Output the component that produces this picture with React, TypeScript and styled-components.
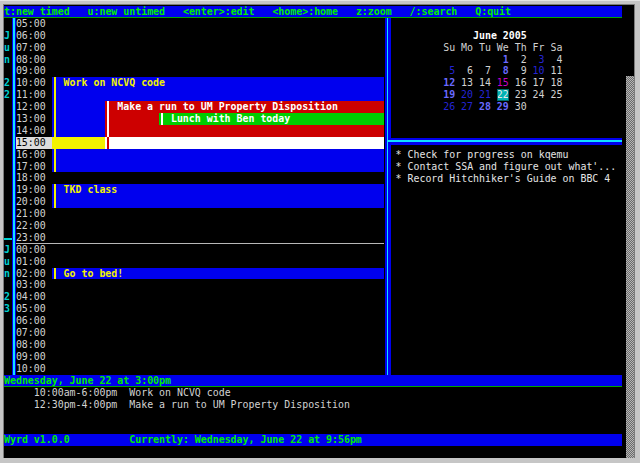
import React from 'react'
import styled, { createGlobalStyle, css } from 'styled-components'

const ROW = 11.9
const BLUE = '#0000ee'
const CYAN = '#00d0d0'
const GREEN = '#00ee00'
const YELLOW = '#f2f200'
const RED = '#cd0000'
const EV_GREEN = '#00cd00'
const LIGHT = '#d2d2d2'

const GlobalStyle = createGlobalStyle`
  html, body {
    margin: 0;
    padding: 0;
    background: #c6c6c6;
  }
  body {
    font-family: 'DejaVu Sans Mono', 'Liberation Mono', monospace;
    font-size: 9.92px;
    line-height: ${ROW}px;
  }
`

const Frame = styled.div`
  width: 640px;
  height: 463px;
  box-sizing: border-box;
  padding: 3px 0 0 3px;
  background: #c6c6c6;
  border-top: 1px solid #e4e4e4;
`

const Terminal = styled.div`
  display: flex;
  height: ${ROW * 38 + 1}px;
  background: #000;
  border-top: 1px solid #7c7c7c;
  border-left: 1px solid #7c7c7c;
  width: fit-content;
`

const Screen = styled.div`
  width: 618px;
  padding: 1px 4px 0 0;
  display: flex;
  flex-direction: column;
`

const Scrollbar = styled.div`
  width: 8px;
  display: flex;
  flex-direction: column;
  border-right: 1px solid #7c7c7c;
`

const Track = styled.div`
  height: 71px;
  background: #000;
`

const Thumb = styled.div`
  flex: 1;
  background: repeating-conic-gradient(#6c6c6c 0 25%, #b6b6b6 0 50%) 0 0 / 2px 2px;
`

// a full-width ncurses status line: blue with green text
const Bar = styled.div<{ $underline?: boolean; $spaced?: boolean }>`
  display: flex;
  gap: ${(p) => (p.$spaced ? '3ch' : '0')};
  height: ${ROW}px;
  flex: none;
  background: ${BLUE};
  color: ${GREEN};
  font-weight: bold;
  white-space: pre;
  ${(p) =>
    p.$underline &&
    css`
      box-shadow: inset 0 -1px 0 #00a400;
    `}
`

const BarCell = styled.span<{ $w?: number }>`
  ${(p) => p.$w && `width: ${p.$w}ch;`}
`

const Body = styled.div`
  display: flex;
  height: ${ROW * 30}px;
  flex: none;
`

const Timeline = styled.div`
  display: flex;
`

const DayColumn = styled.div`
  width: 1ch;
  display: flex;
  flex-direction: column;
`

const DayCell = styled.div<{ $dash?: boolean }>`
  height: ${ROW}px;
  text-align: center;
  color: ${CYAN};
  font-weight: bold;
  ${(p) =>
    p.$dash &&
    css`
      background: linear-gradient(to bottom, transparent 6px, ${CYAN} 6px 8px, transparent 8px);
      margin-right: -2px;
    `}
`

const VRule = styled.div`
  width: 1ch;
  background: linear-gradient(
    90deg,
    transparent 0 2px,
    ${BLUE} 2px 3px,
    #10e0ff 3px 4.6px,
    ${BLUE} 4.6px 5.6px,
    transparent 5.6px
  );
`

const Rows = styled.div`
  display: flex;
  flex-direction: column;
`

const HourRow = styled.div<{ $sep?: boolean }>`
  display: flex;
  height: ${ROW}px;
  ${(p) =>
    p.$sep &&
    css`
      box-shadow: inset 0 -1px 0 #b8b8b8;
    `}
`

const TimeLabel = styled.div<{ $cursor?: boolean }>`
  width: 6ch;
  color: ${(p) => (p.$cursor ? '#000' : LIGHT)};
  background: ${(p) => (p.$cursor ? '#dcdcdc' : 'transparent')};
`

const Events = styled.div`
  width: 332.4px;
  display: flex;
`

const Segment = styled.div<{ $bg: string; $fg: string; $w?: number }>`
  display: flex;
  flex: ${(p) => (p.$w ? `0 0 ${p.$w}ch` : '1')};
  background: ${(p) => p.$bg};
  color: ${(p) => p.$fg};
  font-weight: bold;
  white-space: pre;
  overflow: hidden;
`

const Pipe = styled.span<{ $color: string }>`
  flex: none;
  width: 1ch;
  height: ${ROW}px;
  margin-right: 1ch;
  background: linear-gradient(
    90deg,
    transparent calc(50% - 1px),
    ${(p) => p.$color} calc(50% - 1px) calc(50% + 1px),
    transparent calc(50% + 1px)
  );
`

const Divider = styled.div`
  width: 5.6px;
  margin-left: 1px;
  flex: none;
  background: linear-gradient(90deg, ${BLUE} 0 1.7px, #10e0ff 1.7px 3.5px, ${BLUE} 3.5px);
`

const SidePanel = styled.div`
  flex: 1;
  display: flex;
  flex-direction: column;
`

const Calendar = styled.div`
  height: ${ROW * 10}px;
  box-sizing: border-box;
  padding: ${ROW}px 0 0 52.5px;
`

const CalTitle = styled.div`
  padding-left: 5ch;
  color: #fff;
  font-weight: bold;
`

const CalGrid = styled.div`
  display: grid;
  grid-template-columns: repeat(7, 2ch);
  column-gap: 1ch;
  grid-auto-rows: ${ROW}px;
  text-align: right;
`

type Tone = 'plain' | 'dim' | 'bright' | 'magenta' | 'today' | 'head'

const toneStyles: Record<Tone, ReturnType<typeof css>> = {
  plain: css`color: ${LIGHT};`,
  head: css`color: ${LIGHT};`,
  dim: css`color: #2424d4;`,
  bright: css`color: #6a6aff; font-weight: bold;`,
  magenta: css`color: #c800c8;`,
  today: css`color: #e8e8e8; background: #00b2b2; outline: 1px solid #006a6a; outline-offset: -1px;`,
}

const DayNum = styled.span<{ $tone: Tone }>`
  ${(p) => toneStyles[p.$tone]}
`

const SepRow = styled.div`
  height: ${ROW}px;
  flex: none;
`

const HSep = styled.div`
  margin: 1.1px 0 0 -2.4px;
  height: 7px;
  background: linear-gradient(to bottom, ${BLUE} 0 2.4px, #10e0ff 2.4px 4.4px, ${BLUE} 4.4px);
`

const TodoList = styled.div`
  padding-left: 4.9px;
  display: flex;
  flex-direction: column;
`

const TodoItem = styled.div`
  display: flex;
  gap: 1ch;
  height: ${ROW}px;
  color: #e4e4e4;
  white-space: pre;
`

const Agenda = styled.div`
  height: ${ROW * 4}px;
  flex: none;
  padding-left: 5ch;
  color: ${LIGHT};
`

const AgendaRow = styled.div`
  display: flex;
  white-space: pre;
`

const AgendaTime = styled.span`
  width: 16ch;
`

const hours = [5, 6, 7, 8, 9, 10, 11, 12, 13, 14, 15, 16, 17, 18, 19, 20, 21, 22, 23, 0, 1, 2, 3, 4, 5, 6, 7, 8, 9, 10]

const dayLabels: Record<number, string> = {
  1: 'J', 2: 'u', 3: 'n', 5: '2', 6: '2',
  19: 'J', 20: 'u', 21: 'n', 23: '2', 24: '3',
}

type SegKind = 'blue' | 'red' | 'green' | 'cursorBlue' | 'cursorRed'
type Seg = { kind: SegKind; w?: number; text?: string }

const segColors: Record<SegKind, { bg: string; fg: string; pipe?: boolean }> = {
  blue: { bg: BLUE, fg: YELLOW, pipe: true },
  red: { bg: RED, fg: '#fff', pipe: true },
  green: { bg: EV_GREEN, fg: '#fff', pipe: true },
  cursorBlue: { bg: YELLOW, fg: BLUE },
  cursorRed: { bg: '#fff', fg: RED, pipe: true },
}

const events: Record<number, Seg[]> = {
  5: [{ kind: 'blue', text: 'Work on NCVQ code' }],
  6: [{ kind: 'blue' }],
  7: [{ kind: 'blue', w: 9 }, { kind: 'red', text: 'Make a run to UM Property Disposition' }],
  8: [{ kind: 'blue', w: 9 }, { kind: 'red', w: 9 }, { kind: 'green', text: 'Lunch with Ben today' }],
  9: [{ kind: 'blue', w: 9 }, { kind: 'red' }],
  10: [{ kind: 'cursorBlue', w: 9 }, { kind: 'cursorRed' }],
  11: [{ kind: 'blue' }],
  12: [{ kind: 'blue' }],
  14: [{ kind: 'blue', text: 'TKD class' }],
  15: [{ kind: 'blue' }],
  21: [{ kind: 'blue', text: 'Go to bed!' }],
}

const CURSOR_ROW = 10

const dateTones: Record<number, Tone> = {
  1: 'bright', 3: 'dim', 5: 'dim', 8: 'bright', 10: 'dim', 12: 'bright',
  15: 'magenta', 19: 'bright', 20: 'dim', 21: 'dim', 22: 'today',
  26: 'dim', 27: 'dim', 28: 'bright', 29: 'bright',
}

const todos = [
  'Check for progress on kqemu',
  "Contact SSA and figure out what'...",
  "Record Hitchhiker's Guide on BBC 4",
]

const pad = (n: number) => String(n).padStart(2, '0')

const EventRow = ({ segs }: { segs: Seg[] }) => (
  <Events>
    {segs.map((s, i) => {
      const c = segColors[s.kind]
      return (
        <Segment key={i} $bg={c.bg} $fg={c.fg} $w={s.w}>
          {c.pipe && <Pipe $color={c.fg} />}
          {s.text}
        </Segment>
      )
    })}
  </Events>
)

const MonthCalendar = () => {
  const cells: React.ReactNode[] = []
  ;['Su', 'Mo', 'Tu', 'We', 'Th', 'Fr', 'Sa'].forEach((d) =>
    cells.push(
      <DayNum key={d} $tone="head">
        {d}
      </DayNum>
    )
  )
  for (let i = 0; i < 3; i++) cells.push(<span key={`e${i}`} />)
  for (let d = 1; d <= 30; d++)
    cells.push(
      <DayNum key={d} $tone={dateTones[d] ?? 'plain'}>
        {d}
      </DayNum>
    )
  return (
    <Calendar>
      <CalTitle>June 2005</CalTitle>
      <CalGrid>{cells}</CalGrid>
    </Calendar>
  )
}

export default function App() {
  return (
    <Frame>
      <GlobalStyle />
      <Terminal>
        <Screen>
          <Bar $underline $spaced>
            <BarCell>t:new timed</BarCell>
            <BarCell>u:new untimed</BarCell>
            <BarCell>&lt;enter&gt;:edit</BarCell>
            <BarCell>&lt;home&gt;:home</BarCell>
            <BarCell>z:zoom</BarCell>
            <BarCell>/:search</BarCell>
            <BarCell>Q:quit</BarCell>
          </Bar>
          <Body>
            <Timeline>
              <DayColumn>
                {hours.map((_, i) => (
                  <DayCell key={i} $dash={i === 18}>
                    {dayLabels[i] ?? ''}
                  </DayCell>
                ))}
              </DayColumn>
              <VRule />
              <Rows>
                {hours.map((h, i) => (
                  <HourRow key={i} $sep={i === 18}>
                    <TimeLabel $cursor={i === CURSOR_ROW}>{pad(h)}:00</TimeLabel>
                    <EventRow segs={events[i] ?? []} />
                  </HourRow>
                ))}
              </Rows>
            </Timeline>
            <Divider />
            <SidePanel>
              <MonthCalendar />
              <SepRow>
                <HSep />
              </SepRow>
              <TodoList>
                {todos.map((t) => (
                  <TodoItem key={t}>
                    <span>*</span>
                    <span>{t}</span>
                  </TodoItem>
                ))}
              </TodoList>
            </SidePanel>
          </Body>
          <Bar $underline>
            <BarCell>Wednesday, June 22 at 3:00pm</BarCell>
          </Bar>
          <Agenda>
            <AgendaRow>
              <AgendaTime>10:00am-6:00pm</AgendaTime>
              <span>Work on NCVQ code</span>
            </AgendaRow>
            <AgendaRow>
              <AgendaTime>12:30pm-4:00pm</AgendaTime>
              <span>Make a run to UM Property Disposition</span>
            </AgendaRow>
          </Agenda>
          <Bar>
            <BarCell $w={21}>Wyrd v1.0.0</BarCell>
            <BarCell>Currently: Wednesday, June 22 at 9:56pm</BarCell>
          </Bar>
        </Screen>
        <Scrollbar>
          <Track />
          <Thumb />
        </Scrollbar>
      </Terminal>
    </Frame>
  )
}
